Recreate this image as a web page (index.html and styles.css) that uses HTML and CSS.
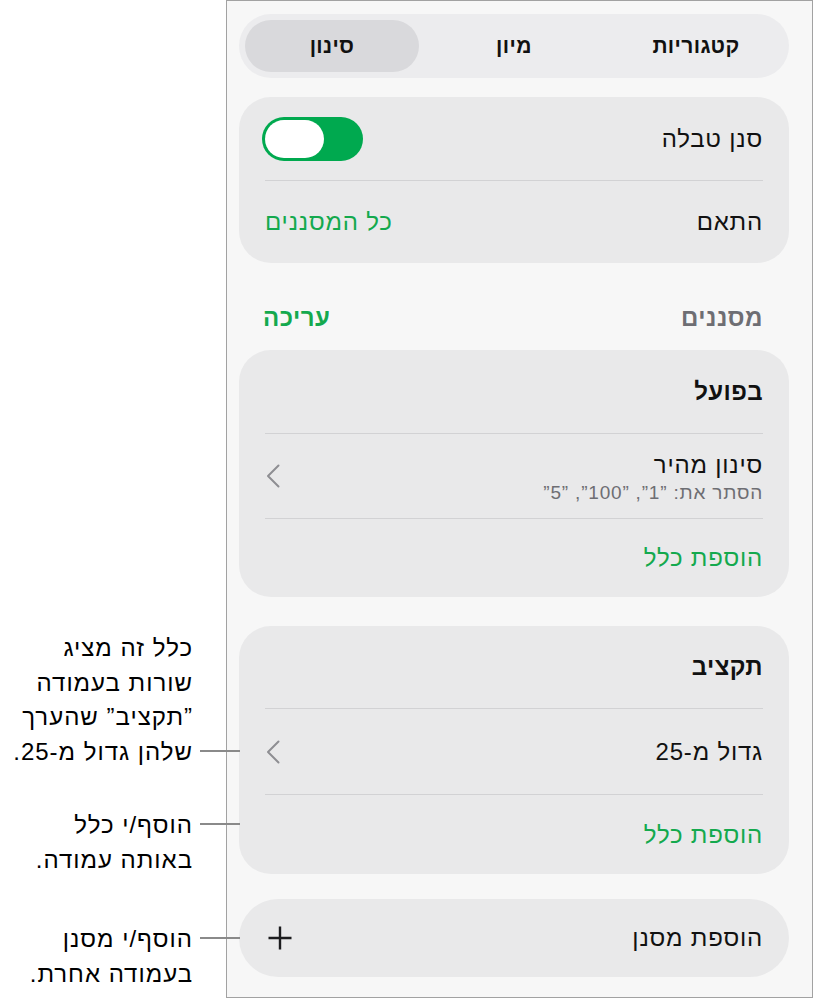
FILE: index.html
```html
<!DOCTYPE html>
<html lang="he">
<head>
    <meta charset="UTF-8">
    <meta name="viewport" content="width=device-width, initial-scale=1.0">
    <title>סינון</title>
    <link rel="stylesheet" href="styles.css">
</head>
<body>
    <div class="page">
        <!-- Callouts on the left -->
        <aside class="notes">
            <div class="note note-rule">
                <p dir="rtl">כלל זה מציג<br>שורות בעמודה<br>”תקציב” שהערך<br>שלהן גדול מ-25.</p>
                <span class="leader"></span>
            </div>
            <div class="note note-add-rule">
                <p dir="rtl">הוסף/י כלל<br>באותה עמודה.</p>
                <span class="leader"></span>
            </div>
            <div class="note note-add-filter">
                <p dir="rtl">הוסף/י מסנן<br>בעמודה אחרת.</p>
                <span class="leader"></span>
            </div>
        </aside>

        <!-- Filter panel -->
        <main class="panel" dir="rtl">
            <div class="segments">
                <button class="seg">קטגוריות</button>
                <button class="seg">מיון</button>
                <button class="seg active">סינון</button>
            </div>

            <section class="card card-table">
                <div class="row">
                    <span class="label">סנן טבלה</span>
                    <span class="switch"><span class="knob"></span></span>
                </div>
                <div class="divider"></div>
                <div class="row row-short">
                    <span class="label">התאם</span>
                    <a href="#" class="link">כל המסננים</a>
                </div>
            </section>

            <div class="section-head">
                <span class="section-title">מסננים</span>
                <a href="#" class="link link-bold">עריכה</a>
            </div>

            <section class="card">
                <div class="row row-title">
                    <span class="title">בפועל</span>
                </div>
                <div class="divider"></div>
                <div class="row">
                    <div class="label-stack">
                        <span class="label">סינון מהיר</span>
                        <span class="sub">הסתר את: ”1”, ”100”, ”5”</span>
                    </div>
                    <svg class="chevron" width="14" height="24" viewBox="0 0 14 24">
                        <path d="M12.5 1.5 L2 12 L12.5 22.5" fill="none" stroke="#8e8e93" stroke-width="2" stroke-linecap="round" stroke-linejoin="round"/>
                    </svg>
                </div>
                <div class="divider"></div>
                <div class="row row-action">
                    <a href="#" class="link">הוספת כלל</a>
                </div>
            </section>

            <section class="card card-budget">
                <div class="row row-title">
                    <span class="title">תקציב</span>
                </div>
                <div class="divider"></div>
                <div class="row">
                    <span class="label">גדול מ-25</span>
                    <svg class="chevron" width="14" height="24" viewBox="0 0 14 24">
                        <path d="M12.5 1.5 L2 12 L12.5 22.5" fill="none" stroke="#8e8e93" stroke-width="2" stroke-linecap="round" stroke-linejoin="round"/>
                    </svg>
                </div>
                <div class="divider"></div>
                <div class="row row-action">
                    <a href="#" class="link">הוספת כלל</a>
                </div>
            </section>

            <section class="card card-add">
                <div class="row row-action">
                    <span class="label">הוספת מסנן</span>
                    <svg class="plus" width="24" height="24" viewBox="0 0 24 24">
                        <path d="M12 0.5 V23.5 M0.5 12 H23.5" fill="none" stroke="#1c1c1e" stroke-width="2.4"/>
                    </svg>
                </div>
            </section>
        </main>
    </div>
</body>
</html>
```

FILE: styles.css
```css
/* General Styling */
* {
    margin: 0;
    padding: 0;
    box-sizing: border-box;
    font-family: "Liberation Sans", Arial, sans-serif;
}

body {
    background: #ffffff;
    color: #000;
}

a {
    text-decoration: none;
}

/* Page: callouts + panel side by side */
.page {
    position: relative;
    display: flex;
    width: 814px;
    height: 999px;
}

/* Callouts */
.notes {
    position: relative;
    width: 226px;
    flex-shrink: 0;
}

.note {
    position: absolute;
    left: 0;
    width: 240px;
    display: flex;
    justify-content: flex-end;
    gap: 7px;
    z-index: 2;
}

.note p {
    font-size: 24px;
    line-height: 34.5px;
    letter-spacing: 1px;
    text-align: right;
    color: #000;
}

.leader {
    width: 40px;
    height: 2px;
    background: #8a8a8a;
}

.note-rule {
    top: 631px;
    align-items: flex-end;
}

.note-rule .leader {
    margin-bottom: 17px;
}

.note-add-rule {
    top: 808px;
    align-items: flex-start;
}

.note-add-rule .leader {
    margin-top: 15px;
}

.note-add-filter {
    top: 922px;
    align-items: flex-start;
}

.note-add-filter .leader {
    margin-top: 15px;
}

/* Panel */
.panel {
    width: 587px;
    height: 998px;
    background: #f7f7f7;
    border: 1px solid #a2a2a2;
    padding: 13px 23px 0 12px;
}

/* Segmented control */
.segments {
    display: flex;
    gap: 8px;
    height: 64px;
    padding: 6px;
    background: #ececee;
    border-radius: 32px;
}

.seg {
    flex: 1;
    border: none;
    background: none;
    border-radius: 26px;
    font-size: 21px;
    font-weight: 600;
    letter-spacing: 0.4px;
    color: #111;
    cursor: pointer;
}

.seg.active {
    background: #d9d9dc;
}

/* Cards */
.card {
    background: #e9e9ea;
    border-radius: 32px;
    padding: 0 26px;
}

.card-table {
    margin-top: 19px;
}

.card-budget {
    margin-top: 29px;
}

.card-add {
    margin-top: 25px;
    border-radius: 39px;
}

/* Rows inside cards */
.row {
    display: flex;
    align-items: center;
    justify-content: space-between;
    height: 84px;
}

.row-title {
    height: 83px;
}

.row-action {
    height: 78px;
}

.card-table .row {
    height: 83px;
}

.card-table .row-short {
    height: 82px;
}

.card-budget .row {
    height: 85px;
}

.card-budget .row-title {
    height: 82px;
}

.card-budget .row-action {
    height: 79px;
}

.divider {
    height: 1px;
    background: #d2d2d4;
}

.label {
    font-size: 24px;
    letter-spacing: 0.8px;
    color: #111;
}

.title {
    font-size: 24px;
    font-weight: 700;
    letter-spacing: 0.4px;
    color: #111;
}

.label-stack {
    display: flex;
    flex-direction: column;
    gap: 3px;
    padding-top: 2px;
}

.sub {
    font-size: 19px;
    letter-spacing: 0.8px;
    color: #6e6e73;
}

.link {
    font-size: 24px;
    letter-spacing: 0.8px;
    color: #14a94e;
}

.link-bold {
    font-weight: 700;
    letter-spacing: 0.5px;
}

/* Toggle switch */
.switch {
    direction: ltr;
    display: flex;
    width: 101px;
    height: 44px;
    padding: 3px;
    margin-left: -3px;
    background: #00a94f;
    border-radius: 22px;
}

.knob {
    width: 59px;
    height: 38px;
    background: #fff;
    border-radius: 19px;
}

.chevron {
    margin-left: 1px;
}

.plus {
    margin-left: 3px;
}

/* Section header */
.section-head {
    display: flex;
    align-items: center;
    justify-content: space-between;
    height: 87px;
    padding: 42px 26px 19px 24px;
}

.section-title {
    font-size: 24px;
    font-weight: 700;
    letter-spacing: 0.5px;
    color: #6e6e73;
}
```
